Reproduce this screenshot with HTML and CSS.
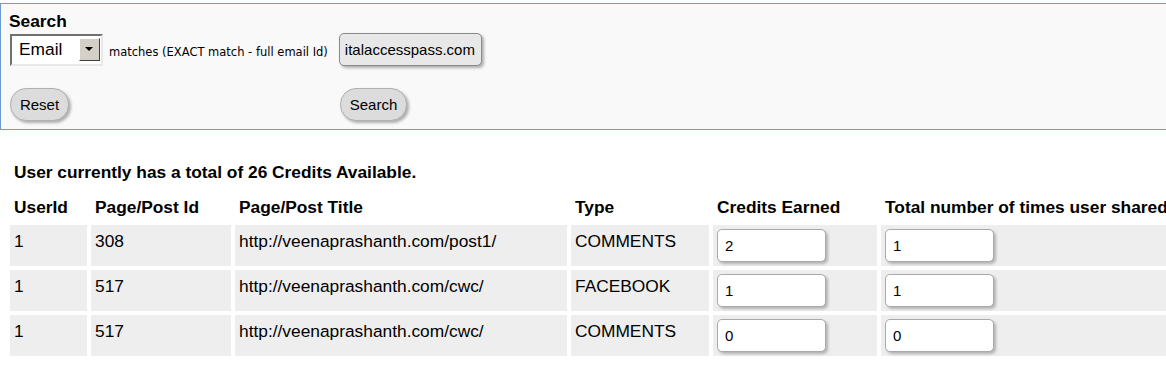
FILE: index.html
```html
<!DOCTYPE html>
<html lang="en">
<head>
    <meta charset="UTF-8">
    <title>User Credits</title>
    <link rel="stylesheet" href="styles.css">
</head>
<body>

    <form class="search-box">
        <div class="search-title">Search</div>
        <div class="search-row">
            <div class="select">
                <span class="select-value">Email</span>
                <span class="select-arrow"></span>
            </div>
            <span class="hint">matches (EXACT match - full email Id)</span>
            <input type="text" class="search-input" value="italaccesspass.com">
        </div>
        <div class="button-row">
            <button type="button" class="btn reset">Reset</button>
            <button type="button" class="btn search">Search</button>
        </div>
    </form>

    <div class="content">
        <p class="total">User currently has a total of 26 Credits Available.</p>

        <table class="credits">
            <thead>
                <tr>
                    <th class="c-user">UserId</th>
                    <th class="c-post">Page/Post Id</th>
                    <th class="c-title">Page/Post Title</th>
                    <th class="c-type">Type</th>
                    <th class="c-earned">Credits Earned</th>
                    <th class="c-shared">Total number of times user shared</th>
                </tr>
            </thead>
            <tbody>
                <tr>
                    <td>1</td>
                    <td>308</td>
                    <td>http://veenaprashanth.com/post1/</td>
                    <td>COMMENTS</td>
                    <td><input type="text" class="num" value="2"></td>
                    <td><input type="text" class="num" value="1"></td>
                </tr>
                <tr>
                    <td>1</td>
                    <td>517</td>
                    <td>http://veenaprashanth.com/cwc/</td>
                    <td>FACEBOOK</td>
                    <td><input type="text" class="num" value="1"></td>
                    <td><input type="text" class="num" value="1"></td>
                </tr>
                <tr>
                    <td>1</td>
                    <td>517</td>
                    <td>http://veenaprashanth.com/cwc/</td>
                    <td>COMMENTS</td>
                    <td><input type="text" class="num" value="0"></td>
                    <td><input type="text" class="num" value="0"></td>
                </tr>
            </tbody>
        </table>
    </div>

</body>
</html>
```

FILE: styles.css
```css
body {
    margin: 0;
    padding-top: 3px;
    font-family: "Liberation Sans", Arial, sans-serif;
    font-size: 13pt;
    color: #000;
    background: #fff;
    overflow: hidden;
}
.search-box {
    width: 1400px;
    height: 127px;
    box-sizing: border-box;
    border: 1px solid #6c9bd2;
    background: #f9f9f9;
    padding: 8px 0 0 8px;
    margin: 0;
}
.search-title {
    font-weight: bold;
    font-size: 13pt;
    line-height: 18px;
}
.search-row {
    display: flex;
    align-items: center;
    margin-top: 3px;
}
.select {
    width: 93px;
    height: 32px;
    box-sizing: border-box;
    margin-left: 1px;
    background: #fff;
    border-top: 2px solid #707070;
    border-left: 2px solid #707070;
    border-right: 2px solid #e8e8e8;
    border-bottom: 2px solid #e8e8e8;
    display: flex;
    align-items: center;
    justify-content: space-between;
}
.select-value {
    font-size: 13pt;
    padding-left: 7px;
}
.select-arrow {
    width: 19px;
    height: 21px;
    margin-right: 1px;
    background: #d4d0c8;
    border-top: 1px solid #fff;
    border-left: 1px solid #fff;
    border-right: 1px solid #404040;
    border-bottom: 1px solid #404040;
    position: relative;
}
.select-arrow::after {
    content: "";
    position: absolute;
    left: 5px;
    top: 8px;
    border-left: 4px solid transparent;
    border-right: 4px solid transparent;
    border-top: 4px solid #000;
}
.hint {
    font-family: "DejaVu Sans", Verdana, sans-serif;
    font-size: 11.5px;
    margin-left: 6px;
    margin-top: 4px;
}
.search-input {
    width: 143px;
    height: 33px;
    box-sizing: border-box;
    margin-left: 11px;
    padding: 0 5px;
    border: 1px solid #8a8a8a;
    border-radius: 5px;
    background: #e8e8e8;
    box-shadow: 2px 2px 3px rgba(0, 0, 0, 0.3);
    font-family: "Liberation Sans", Arial, sans-serif;
    font-size: 15px;
    color: #000;
}
.button-row {
    display: flex;
    margin-top: 22px;
}
.btn {
    height: 33px;
    border: 1px solid #b0b0b0;
    border-radius: 16px;
    background: #dcdcdc;
    box-shadow: 2px 2px 3px rgba(0, 0, 0, 0.3);
    font-family: "Liberation Sans", Arial, sans-serif;
    font-size: 15px;
    color: #000;
    padding: 0;
}
.reset {
    width: 59px;
    margin-left: 1px;
}
.search {
    width: 67px;
    margin-left: 271px;
}
.content {
    padding-left: 6px;
}
.total {
    font-weight: bold;
    line-height: 20px;
    margin: 32px 0 0 8px;
}
.credits {
    border-collapse: separate;
    border-spacing: 4px;
    width: 1400px;
    margin-top: 11px;
    table-layout: fixed;
}
.credits th {
    text-align: left;
    line-height: 20px;
    padding: 0 4px 4px;
}
.credits td {
    background: #eeeeee;
    vertical-align: top;
    padding: 4px;
    line-height: 24px;
    height: 33px;
}
.c-user { width: 69px; }
.c-post { width: 132px; }
.c-title { width: 324px; }
.c-type { width: 130px; }
.c-earned { width: 156px; }
.num {
    width: 109px;
    height: 33px;
    box-sizing: border-box;
    border: 1px solid #aaa;
    border-radius: 5px;
    background: #fff;
    box-shadow: 2px 2px 3px rgba(0, 0, 0, 0.25);
    padding: 0 7px;
    font-family: "Liberation Sans", Arial, sans-serif;
    font-size: 15px;
    margin: 0;
    display: block;
}
```
